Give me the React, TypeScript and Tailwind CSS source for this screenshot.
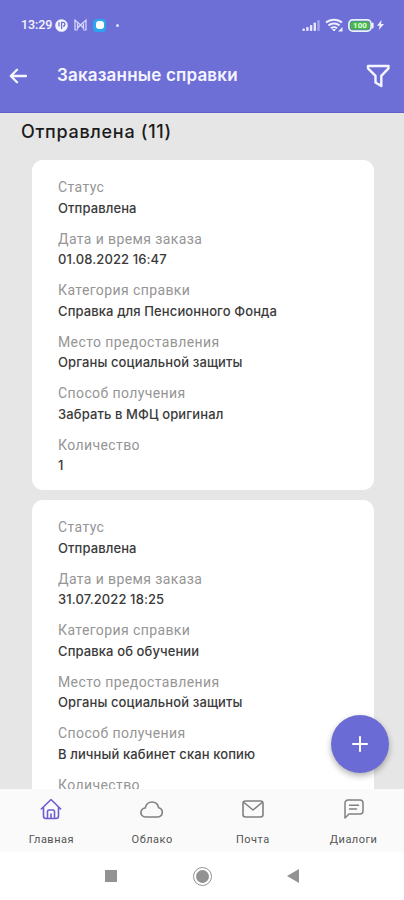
import { Plus } from "lucide-react"
import type { ReactNode } from "react"
import { clsx } from "clsx"

type Field = { label: string; value?: string }

const requests: { id: number; fields: Field[] }[] = [
    {
        id: 1,
        fields: [
            { label: "Статус", value: "Отправлена" },
            { label: "Дата и время заказа", value: "01.08.2022 16:47" },
            { label: "Категория справки", value: "Справка для Пенсионного Фонда" },
            { label: "Место предоставления", value: "Органы социальной защиты" },
            { label: "Способ получения", value: "Забрать в МФЦ оригинал" },
            { label: "Количество", value: "1" },
        ],
    },
    {
        id: 2,
        fields: [
            { label: "Статус", value: "Отправлена" },
            { label: "Дата и время заказа", value: "31.07.2022 18:25" },
            { label: "Категория справки", value: "Справка об обучении" },
            { label: "Место предоставления", value: "Органы социальной защиты" },
            { label: "Способ получения", value: "В личный кабинет скан копию" },
            { label: "Количество" },
        ],
    },
]

function StatusBar() {
    return (
        <div className="flex h-[50px] items-center justify-between pl-[21px] pr-[20px]">
            <div className="flex items-center">
                <span className="w-[33px] whitespace-nowrap pt-px font-['Roboto',sans-serif] text-[12.5px] font-medium tracking-[-0.1px]">13:29</span>
                <svg className="ml-[1px] size-[13px]" viewBox="0 0 13 13" fill="none">
                    <circle cx="6.5" cy="6.5" r="6.3" fill="#f4f4ff" />
                    <path d="M6.6 10V3.4H8a1.9 1.9 0 0 1 0 3.8M4 3.2v4.2" stroke="#6e6fd6" strokeWidth="1.3" />
                </svg>
                <svg className="ml-[6px] h-[12px] w-[13px]" viewBox="0 0 13 12" fill="none" stroke="#d5d5ff">
                    <path d="M1 11V1.200L6.500 6 12 1.200V11M3.500 10.500V4.500M9.500 10.500V4.500M3.500 9 6.500 6l3 3" strokeWidth="1.300" />
                    <path d="M.6 11h3M9.400 11h3" />
                </svg>
                <div className="ml-[6px] flex size-[13px] items-center justify-center rounded-[4px] bg-[#2ba5ef]">
                    <div className="size-[8px] rounded-[3px] bg-white" />
                </div>
                <div className="ml-[10px] size-[3px] rounded-full bg-[#dedfff]" />
            </div>
            <div className="flex items-center">
                <svg className="h-[13px] w-[19px]" viewBox="0 0 19 13" fill="#e6e6ff">
                    <rect x="0.5" y="9.5" width="2.4" height="2.5" rx="0.8" />
                    <rect x="4.2" y="8" width="2.4" height="4" rx="0.8" />
                    <rect x="7.9" y="6" width="2.4" height="6" rx="0.8" />
                    <rect x="11.6" y="3.5" width="2.4" height="8.5" rx="0.8" />
                    <rect x="15.3" y="1" width="2.4" height="11" rx="0.8" opacity="0.45" />
                </svg>
                <svg className="ml-[4px] h-[14px] w-[18px]" viewBox="0 0 18 14" fill="none" stroke="#eeeeff" strokeWidth="2">
                    <path d="M1 4.500C5.400.7 12.600.7 17 4.500M3.400 7.500c3.200-2.700 8-2.700 11.200 0M5.900 10.300c1.700-1.400 4.500-1.400 6.200 0" />
                    <path d="M9 13 7.600 11.500h2.800z" strokeWidth="1" />
                    <path d="M17.500 9v4.500H13z" fill="#eeeeff" stroke="none" />
                </svg>
                <svg className="ml-[5px] h-[13px] w-[26px]" viewBox="0 0 26 13" fill="none">
                    <rect x="0.900" y="0.900" width="22.200" height="11.200" rx="3.800" stroke="#e8f4f4" strokeWidth="1.700" />
                    <rect x="2.500" y="2.500" width="19" height="8" rx="2" fill="#45b845" />
                    <path d="M24.700 4.500v4" stroke="#f0f0ff" strokeWidth="1.800" strokeLinecap="round" />
                    <text x="12" y="9.400" textAnchor="middle" fontFamily="Roboto, sans-serif" fontSize="8" fontWeight="700" fill="#e5ffe5">100</text>
                </svg>
                <svg className="ml-[3px] h-[10px] w-[7px]" viewBox="0 0 7 10" fill="#eeeeff">
                    <path d="M4.500 0 0 5.800h2.700L1.800 10 7 4.100H4.100z" />
                </svg>
            </div>
        </div>
    )
}

function Header() {
    return (
        <header className="h-[113px] shrink-0 border-b border-[#625fca] bg-[#6e6fd6] text-[#f5f5ff]">
            <StatusBar />
            <div className="flex h-[52px] items-center pl-[7px] pr-[14px]">
                <button type="button" aria-label="Назад" className="flex size-[22px] items-center justify-center">
                    <svg className="h-[16px] w-[18px]" viewBox="0 0 18 16" fill="none" stroke="currentColor" strokeWidth="2.300" strokeLinecap="round" strokeLinejoin="round">
                        <path d="M17 8H2M8 1.700 1.800 8 8 14.300" />
                    </svg>
                </button>
                <h1 className="ml-[28px] flex-1 whitespace-nowrap font-['Inter',sans-serif] text-[17px] font-semibold tracking-[0.180px]">Заказанные справки</h1>
                <button type="button" aria-label="Фильтр">
                    <svg className="size-[24px]" viewBox="0 0 24 24" fill="none" stroke="currentColor" strokeWidth="2.400" strokeLinejoin="round">
                        <path d="M2 2h20.500v2.300l-7.200 7.500v10.200l-5.800-3.600v-6.600L2 4.300z" />
                    </svg>
                </button>
            </div>
        </header>
    )
}

function RequestCard({ fields }: { fields: Field[] }) {
    return (
        <div className="flex h-[330px] shrink-0 flex-col gap-[10.500px] rounded-[11px] bg-white px-[26px] pt-[17px]">
            {fields.map((field) => (
                <div key={field.label} className="whitespace-nowrap">
                    <div className="h-[20.500px] font-['Roboto',sans-serif] text-[14px] leading-[20.500px] tracking-[0.400px] text-[#959595]">{field.label}</div>
                    {field.value && (
                        <div className="h-[20.500px] font-['Inter',sans-serif] text-[13px] font-medium leading-[20.500px] tracking-[0.110px] text-[#3a3a3a]">{field.value}</div>
                    )}
                </div>
            ))}
        </div>
    )
}

function NavItem({ label, active, children }: { label: string; active?: boolean; children: ReactNode }) {
    return (
        <button type="button" className="flex flex-1 flex-col items-center pt-[7px]">
            <span className={clsx("flex h-[26px] items-center justify-center", active ? "text-[#6c5dd3]" : "text-[#808080]")}>{children}</span>
            <span className="mt-[10px] font-['Roboto',sans-serif] text-[11px] leading-[16px] tracking-[0.500px] text-[#555]">{label}</span>
        </button>
    )
}

function BottomNav() {
    return (
        <nav className="flex h-[63px] shrink-0 bg-[#fafafa] pl-px">
            <NavItem label="Главная" active>
                <svg className="size-[22px]" viewBox="0 0 22 22" fill="none" stroke="currentColor" strokeWidth="1.600" strokeLinecap="round" strokeLinejoin="round">
                    <path d="M1.300 11 11 1.500 20.700 11M3.500 9v9a2.500 2.500 0 0 0 2.500 2.500h10a2.500 2.500 0 0 0 2.500-2.500V9" />
                    <path d="M7.500 20v-6.500a1.500 1.500 0 0 1 1.500-1.500h4a1.500 1.500 0 0 1 1.500 1.500V20" />
                    <path d="M11 16v4" />
                </svg>
            </NavItem>
            <NavItem label="Облако">
                <svg className="h-[17px] w-[24px]" viewBox="0 0 24 17" fill="none" stroke="currentColor" strokeWidth="1.600" strokeLinejoin="round">
                    <path d="M5.500 16a4.500 4.500 0 0 1-.3-9C6 3.500 8.700 1 12 1s6 2.500 6.700 5.800a4.700 4.700 0 0 1-.4 9.200z" />
                </svg>
            </NavItem>
            <NavItem label="Почта">
                <svg className="h-[18px] w-[22px]" viewBox="0 0 22 18" fill="none" stroke="currentColor" strokeWidth="1.600" strokeLinejoin="round">
                    <rect x="1" y="1" width="20" height="16" rx="2.500" />
                    <path d="m2 2.500 9 7.500 9-7.500" />
                </svg>
            </NavItem>
            <NavItem label="Диалоги">
                <svg className="size-[20px]" viewBox="0 0 20 20" fill="none" stroke="currentColor" strokeWidth="1.500" strokeLinecap="round" strokeLinejoin="round">
                    <path d="M1 19V4a3 3 0 0 1 3-3h12a3 3 0 0 1 3 3v8a3 3 0 0 1-3 3H5z" />
                    <path d="M5.500 6.200h9M5.500 10h7" />
                </svg>
            </NavItem>
        </nav>
    )
}

function SystemNav() {
    return (
        <div className="flex h-[48px] shrink-0 items-center bg-white pl-[105px] text-[#929292]">
            <div className="size-[12px] bg-current" />
            <div className="ml-[76px] flex size-[19px] items-center justify-center rounded-full border border-current">
                <div className="size-[13px] rounded-full bg-current" />
            </div>
            <svg className="ml-[75px] h-[14px] w-[12px]" viewBox="0 0 12 14" fill="currentColor">
                <path d="M0 7 12 0v14z" />
            </svg>
        </div>
    )
}

export default function App() {
    return (
        <div className="flex h-[900px] w-[404px] flex-col overflow-hidden bg-white">
            <Header />
            <main className="relative min-h-0 flex-1 overflow-hidden bg-[#e6e6e6]">
                <h2 className="h-[47px] pl-[21px] pt-[5px] font-['Inter',sans-serif] text-[18px] font-medium leading-[28px] tracking-[0.700px] text-[#1c1c1c]">Отправлена (11)</h2>
                <div className="flex flex-col gap-[10px] pl-[32px] pr-[30px]">
                    {requests.map((request) => (
                        <RequestCard key={request.id} fields={request.fields} />
                    ))}
                </div>
                <button
                    type="button"
                    aria-label="Заказать справку"
                    className="absolute bottom-[16px] right-[15px] flex size-[58px] items-center justify-center rounded-full bg-[#6b6bd6] text-white shadow-[0_3px_6px_rgba(0,0,0,0.3)]"
                >
                    <Plus size={24} strokeWidth={2} />
                </button>
            </main>
            <BottomNav />
            <SystemNav />
        </div>
    )
}
